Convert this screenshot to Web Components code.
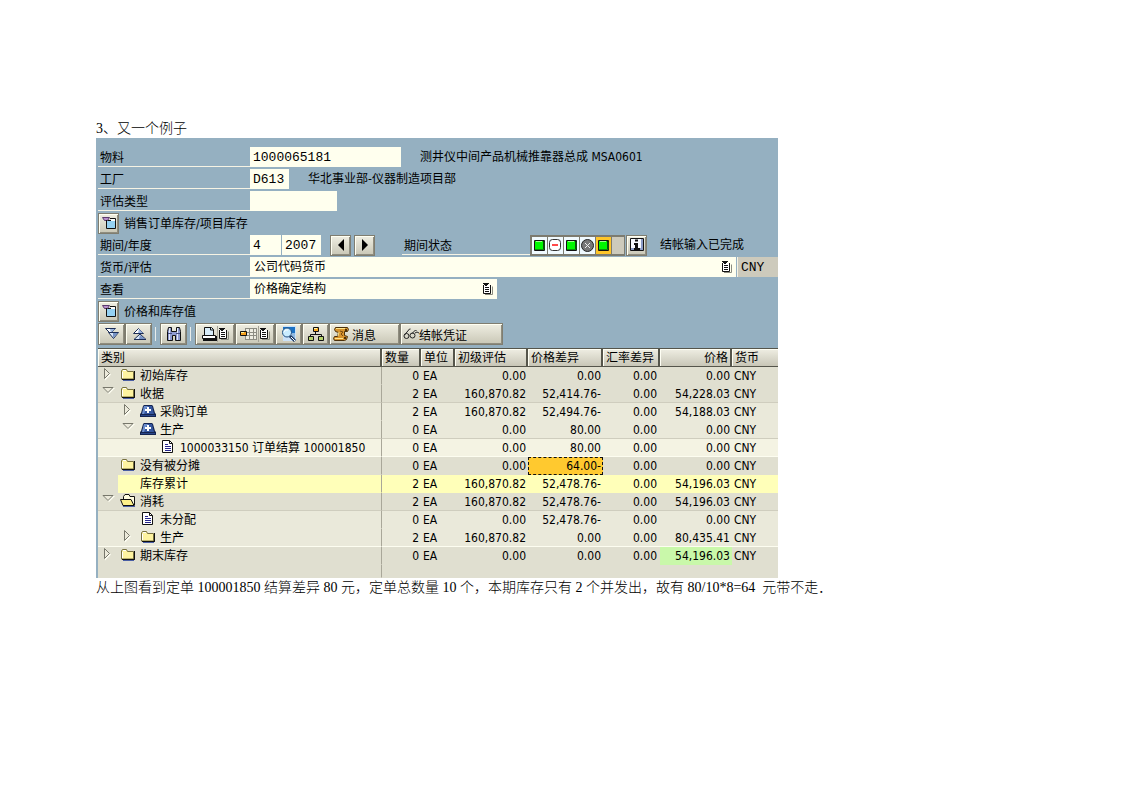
<!DOCTYPE html>
<html lang="zh-CN">
<head>
<meta charset="utf-8">
<title>物料价格分析</title>
<style>
  body { margin: 0; background: #fff; }
</style>
</head>
<body>
<doc-page>
  <doc-text>3、又一个例子</doc-text>
  <price-panel></price-panel>
  <doc-text>从上图看到定单 100001850 结算差异 80 元，定单总数量 10 个，本期库存只有 2 个并发出，故有 80/10*8=64&nbsp; 元带不走．</doc-text>
</doc-page>

<script>
const ICONS = {
  expand: [14, 14, '<path d="M3 1.500v12l6-6z" fill="#fffff4"/><path d="M2.500 1.500v10l5-5z" fill="#eceadb" stroke="#77776b"/>'],
  collapse: [14, 14, '<path d="M1 3h12l-6 6z" fill="#fffff4"/><path d="M1 2.500h10l-5 5z" fill="#eceadb" stroke="#77776b"/>'],
  folder: [16, 16, '<path d="M3 13.500h11" stroke="#4a5fa5"/><path d="M2 12.500h12.500v-8" fill="none" stroke="#101010"/><path d="M1.500 12v-8l1-1.500h4l1 2h6v7.500z" fill="#fdf3a0" stroke="#77703f"/><path d="M2 12.500h12.500v-8.500" fill="none" stroke="#101010"/><path d="M3 3.500h3M2.500 5v6" stroke="#fff"/>'],
  folderopen: [16, 16, '<path d="M3 13.500h12" stroke="#4a5fa5"/><path d="M3.500 6v-2.500l1.500-2h4l1 2h4.500v9" fill="#fffde0" stroke="#111"/><path d="M.5 6.500h10.500l3 6h-11z" fill="#fdf08a" stroke="#111"/>'],
  scale: [16, 16, '<path d="M4 2h8l1 1 2 7 1 1v3h-16v-3l1-1 2-7z" fill="#142450"/><path d="M4 3h8l2 8h-12z" fill="#35569f"/><path d="M4 3h4l-2 3-2 5h-2z" fill="#6d8fce"/><path d="M1 12.500h14" stroke="#28458a"/><path d="M8 4v6M5 7h6" stroke="#fff" stroke-width="2"/>'],
  doc: [16, 16, '<path d="M2.500 1.500h7l3 3v9h-10z" fill="#fff" stroke="#111"/><path d="M9.500 1.500v3h3" fill="none" stroke="#111"/><path d="M5 5.500h3M5 7.500h6M5 9.500h6M5 11.500h6" stroke="#26268c"/>'],
  filterbox: [16, 16, '<path d="M5.500 5.500h9v8h-9z" fill="#95d1f2" stroke="#111"/><path d="M9 3.500h5.500v2" fill="none" stroke="#111"/><path d="M10 4h4v2h-4z" fill="#fff"/><path d="M1.500 2.500h7l-2 3h-3z" fill="#b890cc" stroke="#5b3a6c"/><path d="M5.500 5v5" stroke="#111"/>'],
  left: [12, 12, '<path d="M9 0v12l-6-6z"/>'],
  right: [12, 12, '<path d="M3 0v12l6-6z"/>'],
  down2: [16, 16, '<path d="M1.500 2.500h10l-5 5z" fill="#fff" stroke="#1c2d55"/><path d="M6 3h5l-4 4z" fill="#9bb5df"/><path d="M4.500 6.500h10l-5 6z" fill="#d9e7fa" stroke="#1c2d55"/><path d="M9 7h5l-5 5z" fill="#7693c6"/>'],
  up2: [16, 16, '<path d="M2.500 7.500h10l-5-5z" fill="#fff" stroke="#1c2d55"/><path d="M7 7h5l-4-4z" fill="#9bb5df"/><path d="M3 13.500h12l-6-5.500z" fill="#d9e7fa" stroke="#1c2d55"/><path d="M8 13h6l-5-4z" fill="#7693c6"/>'],
  find: [18, 16, '<path d="M3.500 1.500h3v4h5v-4h3l1 4v9h-5v-5h-3v5h-5v-9z" fill="#8f9bd0" stroke="#111"/><path d="M4.500 2v12M12.500 2v12" stroke="#e4e9fa"/><path d="M3 7.500h4M11 7.500h4" stroke="#444c80"/>'],
  print: [16, 16, '<path d="M3.500 9.500v-8h7l2 2v6" fill="#d8edfa" stroke="#111"/><path d="M9.500 1v3h3" fill="none" stroke="#111"/><path d="M1.500 9.500h13v3h-13z" fill="#fff" stroke="#111"/><path d="M2 14h13v-4" fill="none" stroke="#111" stroke-width="2"/>'],
  menu: [12, 14, '<path d="M3 12.500h7.500v-8" fill="none" stroke="#8c8c80"/><path d="M1.500 3v8.500h7v-8.500" fill="#fff" stroke="#111"/><path d="M1 1h6v1h-1v1h-1v1h-2v-1h-1v-1h-1z" fill="#111"/><path d="M3 5.500h4M3 7.500h4M3 9.500h4" stroke="#111"/>'],
  layout: [18, 16, '<path d="M5 2h12v12h-12z" fill="#eeede2"/><path d="M5 2.500h12M5 6.500h12M5 9.500h12M5 13.500h12M5.500 2v12M9.500 2v12M13.500 2v12M16.500 2v12" stroke="#8d8d83"/><path d="M.5 5.500h6v4h-6z" fill="#f4a01e" stroke="#111"/><path d="M1 6.500h3" stroke="#fff299"/>'],
  preview: [18, 18, '<path d="M3 1h13v15h-13z" fill="#cbe1f7"/><path d="M3 2h12v6h-12z" fill="#1c72c4"/><path d="M12 8h3v7h-3z" fill="#8fb8e0"/><circle cx="7" cy="7.500" r="4.500" fill="#c9ecff" stroke="#214e80"/><path d="M4 7q1-3 4-2" stroke="#fff" fill="none"/><path d="M10 11l5 5" stroke="#19355f" stroke-width="3"/><path d="M11 12l4 4" stroke="#fff"/>'],
  tree: [18, 16, '<path d="M8.500 5v3M3.500 11v-2.500h11v2.500" fill="none" stroke="#111"/><path d="M6.500 1.500h5v4h-5z" fill="#f7a71d" stroke="#111"/><path d="M1.500 10.500h5v4h-5zM11.500 10.500h5v4h-5z" fill="#b5d36b" stroke="#111"/><path d="M7 2.500h3" stroke="#fff5b0"/>'],
  scroll: [18, 16, '<path d="M3.500 1.500h12l1 2-1 2h-3v4l3 1-1 3-2 1h-10l-1-2 1-2h3l1-4-3-1-1-2z" fill="#d6922d" stroke="#4b300b"/><path d="M4 2.500h9M7 6l-1 4M3 12.500h8" stroke="#ffe68d"/><path d="M13 4h2M12 12h2" stroke="#4b300b" stroke-width="2"/><path d="M8 5l3 1-2 2 2 2" stroke="#784c13" fill="none"/>'],
  glasses: [16, 14, '<g fill="none" stroke="#222"><path d="M1.500 8l5-6h1M8.500 7l4-4 1 1"/><circle cx="3.500" cy="9" r="2.500"/><circle cx="9.500" cy="8.500" r="2.500"/><path d="M12 6l2-1 2 1"/></g>'],
  info: [16, 16, '<path d="M1.500 1.500h13v12h-13z" fill="#f8faff" stroke="#111"/><path d="M12 2h2v11h-12v-2h10z" fill="#8b9ac6"/><path d="M6 2.500h3v2h-3zM5 6h4v5h2v2h-6v-2h1v-3h-1z" fill="#111"/>'],
  green: [15, 15, '<rect x="2" y="2" width="11" height="11" rx="1" fill="#111"/><rect x="3" y="3" width="8" height="8" fill="#00f800"/><path d="M4 3.500h6" stroke="#9dff8a"/><path d="M3 11.500h9v-8" fill="none" stroke="#069006"/>'],
  minus: [15, 15, '<rect x="1.500" y="1.500" width="11" height="11" rx="3" fill="#fff" stroke="#333"/><path d="M4 7h6" stroke="#ff4a4a" stroke-width="2"/>'],
  cross: [15, 15, '<circle cx="7.500" cy="7.500" r="6" fill="#777" stroke="#222"/><path d="M5 5l5 5M10 5l-5 5" stroke="#eee"/>']
};

function define(name, html, init) {
  const tpl = document.createElement('template');
  tpl.innerHTML = html;
  customElements.define(name, class extends HTMLElement {
    connectedCallback() {
      if (this.shadowRoot) return;
      const root = this.attachShadow({ mode: 'open' });
      root.append(tpl.content.cloneNode(true));
      if (init) init(this, root);
    }
  });
}

/* Toolbar and tree glyphs */
define('ui-icon', '<style>:host{display:inline-flex;flex:none}svg{display:block}</style>', (el, root) => {
  const [w, h, body] = ICONS[el.getAttribute('name')];
  root.innerHTML += `<svg width="${w}" height="${h}" viewBox="0 0 ${w} ${h}" aria-hidden="true">${body}</svg>`;
});

/* Raised push button */
define('ui-button', `<style>
  :host{display:inline-flex;flex:none;width:21px;height:21px}
  button{flex:1;min-width:0;display:flex;align-items:center;justify-content:center;gap:2px;margin:0;padding:0 2px;
    font:inherit;color:#000;border:1px solid #7f7d70;
    box-shadow:inset 1px 1px #fffff2,inset -1px -1px #8f8d7f;
    background:linear-gradient(#efeee2,#c9c7b6)}
  :host([start]) button{justify-content:flex-start}
  :host([tight]) button{gap:0}
</style><button type="button"><slot></slot></button>`, (el, root) => {
  root.querySelector('button').setAttribute('aria-label', el.getAttribute('hint') || el.textContent.trim());
});

/* Underlined label with one or two entry boxes */
define('ui-field', `<style>
  :host{display:flex;height:20px;min-width:0}
  label{flex:none;box-sizing:border-box;width:152px;padding-left:2px;line-height:23px;border-bottom:1px solid #f6f3e4;white-space:nowrap}
  input{box-sizing:border-box;flex:none;height:20px;margin:0;padding:0 3px;border:0;border-radius:0;background:#ffffee;
    color:#000;font:13px "Liberation Mono","Noto Sans CJK SC",monospace}
  input + input{margin-left:1px}
  .after{display:flex;align-items:center;line-height:23px;white-space:nowrap}
</style><label for="box0"></label><span class="after"><slot></slot></span>`, (el, root) => {
  const label = root.querySelector('label');
  label.textContent = el.getAttribute('label');
  const values = (el.getAttribute('values') || '').split('|');
  const widths = el.getAttribute('widths').split(' ');
  widths.forEach((w, i) => {
    const input = document.createElement('input');
    input.id = 'box' + i;
    input.value = values[i] || '';
    input.style.width = w + 'px';
    if (i) input.setAttribute('aria-label', '年度');
    root.querySelector('.after').before(input);
  });
});

/* Underlined label with a drop-down */
define('ui-choice', `<style>
  :host{display:flex;height:20px;min-width:0}
  label{flex:none;box-sizing:border-box;width:152px;padding-left:2px;line-height:23px;border-bottom:1px solid #f6f3e4}
  .box{display:grid;align-items:center;min-width:0;flex:1;background:#ffffee}
  :host([short]) .box{flex:0 1 247px}
  select,ui-icon{grid-area:1/1}
  select{appearance:none;width:100%;height:20px;margin:0;padding:0 20px 0 4px;border:0;border-radius:0;background:none;color:#000;font:inherit}
  ui-icon{justify-self:end;margin-right:3px;pointer-events:none}
</style><label for="pick"></label><div class="box"><select id="pick"><option></option></select><ui-icon name="menu"></ui-icon></div><slot></slot>`, (el, root) => {
  root.querySelector('label').textContent = el.getAttribute('label');
  root.querySelector('option').textContent = el.getAttribute('value');
});

/* Row of period status lights */
define('status-lights', `<style>
  :host{display:flex;flex:none;box-sizing:border-box;width:95px;height:21px;border:2px solid #7c7b70;border-right-width:1px;background:#cdcabc}
  span{display:flex;align-items:center;justify-content:center;width:15px;border-right:1px solid #7c7b70;background:#f0faff}
  .on{background:#ffc629}
</style><span><ui-icon name="green"></ui-icon></span><span><ui-icon name="minus"></ui-icon></span><span><ui-icon name="green"></ui-icon></span><span><ui-icon name="cross"></ui-icon></span><span class="on"><ui-icon name="green"></ui-icon></span>`);

/* Section heading with toggle button */
define('section-head', `<style>
  :host{display:flex;align-items:center;gap:5px;height:20px;line-height:20px}
  .title{padding-top:2px}
</style><ui-button hint="展开或收起"><ui-icon name="filterbox"></ui-icon></ui-button><span class="title"><slot></slot></span>`);

/* Application toolbar */
define('tool-bar', `<style>
  :host{display:flex;align-items:center;height:22px}
  ui-button{width:27px;height:22px}
  .pair{width:40px}
  .msg{width:71px}
  .voucher{width:103px}
  hr{flex:none;width:1px;height:14px;margin:0 4px 0 3px;border:0;background:#e8ecea}
  i{width:1px;height:16px;background:#a5a397}
</style>
<ui-button hint="全部展开"><ui-icon name="down2"></ui-icon></ui-button>
<ui-button hint="全部收起"><ui-icon name="up2"></ui-icon></ui-button><hr>
<ui-button hint="查找"><ui-icon name="find"></ui-icon></ui-button><hr>
<ui-button class="pair" hint="打印" tight><ui-icon name="print"></ui-icon><i></i><ui-icon name="menu"></ui-icon></ui-button>
<ui-button class="pair" hint="布局" tight><ui-icon name="layout"></ui-icon><i></i><ui-icon name="menu"></ui-icon></ui-button>
<ui-button hint="预览"><ui-icon name="preview"></ui-icon></ui-button>
<ui-button hint="结构"><ui-icon name="tree"></ui-icon></ui-button>
<ui-button class="msg" start><ui-icon name="scroll"></ui-icon>消息</ui-button>
<ui-button class="voucher" start tight><ui-icon name="glasses"></ui-icon>结帐凭证</ui-button>`);

/* Tree table: level, toggle, icon, text, figures */
const A = '160,870.82';
const ROWS = [
  [1, 'expand', 'folder', '初始库存', '0', '0.00', '0.00', '0.00', ''],
  [1, 'collapse', 'folder', '收据', '2', A, '52,414.76-', '54,228.03', 'dark'],
  [2, 'expand', 'scale', '采购订单', '2', A, '52,494.76-', '54,188.03', ''],
  [2, 'collapse', 'scale', '生产', '0', '0.00', '80.00', '0.00', 'dark'],
  [3, '', 'doc', '1000033150 订单结算 100001850', '0', '0.00', '80.00', '0.00', 'light'],
  [1, '', 'folder', '没有被分摊', '0', '0.00', '64.00-', '0.00', 'focus'],
  [1, '', '', '库存累计', '2', A, '52,478.76-', '54,196.03', 'total'],
  [1, 'collapse', 'folderopen', '消耗', '2', A, '52,478.76-', '54,196.03', 'dark'],
  [2, '', 'doc', '未分配', '0', '0.00', '52,478.76-', '0.00', ''],
  [2, 'expand', 'folder', '生产', '2', A, '0.00', '80,435.41', 'light'],
  [1, 'expand', 'folder', '期末库存', '0', '0.00', '0.00', '54,196.03', 'end']
];
define('cost-tree', `<style>
  :host{display:block}
  table{width:100%;table-layout:fixed;border-collapse:separate;border-spacing:0;background:#e0dfd0}
  th{box-sizing:border-box;height:19px;padding:0 2px 0 3px;font-weight:400;text-align:left;line-height:16px;white-space:nowrap;
    border:solid #55554b;border-width:1px 2px 1px 0;box-shadow:inset 1px 1px #fffff4;background:linear-gradient(#efeee3,#c8c6b7)}
  th:last-child{border-right-width:0}
  td{box-sizing:border-box;height:18px;padding:2px 2px 0;line-height:15px;white-space:nowrap;border-bottom:1px solid transparent}
  .num{text-align:right}
  td.rate{padding-right:3px}
  td:first-child{border-right:1px solid #a9a799;padding:0 0 0 2px}
  .l2{background:#eae9da}
  .l3{background:#f4f3e3}
  .dark td{border-bottom-color:#cfcdbe}
  .light td{border-bottom-color:#fdfdf0}
  .total{background:#ffffb9}
  .total td:first-child{background:linear-gradient(90deg,#e0dfd0 20px,#ffffb9 20px)}
  .focus .diff{background:#ffc92f;outline:1px dashed #111;outline-offset:-1px}
  .end .price{background:#c9f8aa}
  .node{display:flex;height:17px}
  .l2 .node{padding-left:20px}
  .l3 .node{padding-left:40px}
  .toggle,.kind{flex:none;width:20px;display:flex;align-items:flex-start}
  .toggle{box-sizing:border-box;padding-left:2px}
  .text{padding-top:2px}
  .fill td{height:13px}
</style>
<table><colgroup><col><col style="width:39px"><col style="width:34px"><col style="width:73px"><col style="width:75px"><col style="width:57px"><col style="width:72px"><col style="width:46px"></colgroup>
<thead><tr><th>类别</th><th>数量</th><th>单位</th><th>初级评估</th><th>价格差异</th><th>汇率差异</th><th class="num">价格</th><th>货币</th></tr></thead><tbody></tbody></table>`, (el, root) => {
  const icon = n => n ? `<ui-icon name="${n}"></ui-icon>` : '';
  root.querySelector('tbody').innerHTML = ROWS.map(([lv, tg, ic, text, qty, first, diff, price, cls]) =>
    `<tr class="l${lv} ${cls}"><td><div class="node"><span class="toggle">${icon(tg)}</span><span class="kind">${icon(ic)}</span><span class="text">${text}</span></div></td>` +
    `<td class="num">${qty}</td><td>EA</td><td class="num">${first}</td><td class="num diff">${diff}</td><td class="num rate">0.00</td><td class="num price">${price}</td><td>CNY</td></tr>`
  ).join('') + '<tr class="fill"><td></td><td colspan="7"></td></tr>';
});

/* Material price screen */
define('price-panel', `<style>
  :host{display:flex;flex-direction:column;gap:2px;box-sizing:border-box;max-width:682px;padding:9px 0 0 2px;background:#95b0c1;color:#000;
    font:12px "DejaVu Sans Condensed","Noto Sans CJK SC",sans-serif}
  .note{margin-left:19px}
  .nav{display:flex;gap:3px;margin-left:9px}
  .state{box-sizing:border-box;width:128px;height:20px;margin-left:27px;padding-left:2px;border-bottom:1px solid #f6f3e4}
  .info{margin:0 13px 0 1px}
  .currency{box-sizing:border-box;flex:none;width:41px;height:20px;margin:0 0 0 1px;padding:0 3px;border:0;border-left:1px solid #f6f3e4;border-radius:0;
    background:#cdcabc;color:#000;font:13px "Liberation Mono",monospace}
  cost-tree{margin-top:1px}
</style>
<ui-field label="物料" values="1000065181" widths="151"><span class="note">测井仪中间产品机械推靠器总成 MSA0601</span></ui-field>
<ui-field label="工厂" values="D613" widths="39"><span class="note">华北事业部-仪器制造项目部</span></ui-field>
<ui-field label="评估类型" widths="87"></ui-field>
<section-head>销售订单库存/项目库存</section-head>
<ui-field label="期间/年度" values="4|2007" widths="31 39">
  <span class="nav"><ui-button hint="上一期间"><ui-icon name="left"></ui-icon></ui-button><ui-button hint="下一期间"><ui-icon name="right"></ui-icon></ui-button></span>
  <span class="state">期间状态</span><status-lights></status-lights>
  <ui-button class="info" hint="信息"><ui-icon name="info"></ui-icon></ui-button><span>结帐输入已完成</span>
</ui-field>
<ui-choice label="货币/评估" value="公司代码货币"><input class="currency" value="CNY" aria-label="货币" readonly></ui-choice>
<ui-choice label="查看" value="价格确定结构" short></ui-choice>
<section-head>价格和库存值</section-head>
<tool-bar></tool-bar>
<cost-tree></cost-tree>`);

/* Running text of the document */
define('doc-text', `<style>
  :host{display:block;padding-top:1px}
  p{margin:0;font:14px/18px "Liberation Serif","Noto Sans CJK SC",serif;font-weight:300;color:#000}
</style><p><slot></slot></p>`);

define('doc-page', `<style>
  :host{display:block;padding:119px 96px 96px}
</style><slot></slot>`);
</script>
</body>
</html>
